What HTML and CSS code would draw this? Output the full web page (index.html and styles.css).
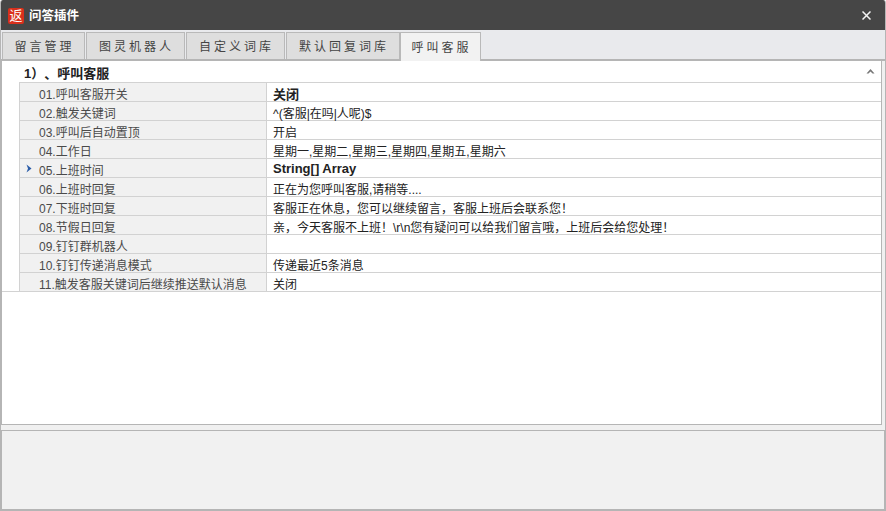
FILE: index.html
```html
<!DOCTYPE html>
<html lang="zh">
<head>
<meta charset="utf-8">
<title>问答插件</title>
<link rel="stylesheet" href="styles.css">
</head>
<body>
<div class="window">
  <header class="titlebar">
    <span class="app-icon">返</span>
    <span class="title">问答插件</span>
    <svg class="close" width="9" height="9" viewBox="0 0 9 9"><path d="M0.5 0.5L8.5 8.5M8.5 0.5L0.5 8.5" stroke="#f4f4f4" stroke-width="1.5" fill="none"/></svg>
  </header>
  <nav class="tabs">
    <div class="tab t1">留言管理</div>
    <div class="tab t2">图灵机器人</div>
    <div class="tab t3">自定义词库</div>
    <div class="tab t4">默认回复词库</div>
    <div class="tab t5 active">呼叫客服</div>
  </nav>
  <main class="grid-panel">
    <div class="section">
      <span class="section-title">1）、呼叫客服</span>
      <svg class="caret" width="9" height="5" viewBox="0 0 9 5"><path d="M4.5 0L8.5 4.5H6.5L4.5 2.5L2.5 4.5H0.5Z" fill="#777"/></svg>
    </div>
    <div class="rows">
      <div class="row"><div class="gutter"></div><div class="label">01.呼叫客服开关</div><div class="value bold">关闭</div></div>
      <div class="row"><div class="gutter"></div><div class="label">02.触发关键词</div><div class="value">^(客服|在吗|人呢)$</div></div>
      <div class="row"><div class="gutter"></div><div class="label">03.呼叫后自动置顶</div><div class="value">开启</div></div>
      <div class="row"><div class="gutter"></div><div class="label">04.工作日</div><div class="value">星期一,星期二,星期三,星期四,星期五,星期六</div></div>
      <div class="row"><div class="gutter"></div><div class="label"><svg class="marker" width="6" height="9" viewBox="0 0 6 9"><path d="M0.5 0.5L5.5 4.5L0.5 8.5L2 4.5Z" fill="#2a5ca8"/></svg>05.上班时间</div><div class="value bold latin">String[] Array</div></div>
      <div class="row"><div class="gutter"></div><div class="label">06.上班时回复</div><div class="value">正在为您呼叫客服,请稍等....</div></div>
      <div class="row"><div class="gutter"></div><div class="label">07.下班时回复</div><div class="value">客服正在休息，您可以继续留言，客服上班后会联系您！</div></div>
      <div class="row"><div class="gutter"></div><div class="label">08.节假日回复</div><div class="value">亲，今天客服不上班！\r\n您有疑问可以给我们留言哦，上班后会给您处理！</div></div>
      <div class="row"><div class="gutter"></div><div class="label">09.钉钉群机器人</div><div class="value"></div></div>
      <div class="row"><div class="gutter"></div><div class="label">10.钉钉传递消息模式</div><div class="value">传递最近5条消息</div></div>
      <div class="row last"><div class="gutter"></div><div class="label">11.触发客服关键词后继续推送默认消息</div><div class="value">关闭</div></div>
    </div>
  </main>
  <footer class="desc"></footer>
</div>
</body>
</html>
```
FILE: styles.css
```css
* { box-sizing: border-box; }
html, body { margin: 0; padding: 0; }
body { width: 886px; height: 511px; overflow: hidden; background: #fff; font: 12px/14px "Liberation Sans", "Noto Sans CJK SC", sans-serif; }
.window {
  width: 886px; height: 511px;
  display: flex; flex-direction: column;
  background: #f0f0f0;
  border: solid #b5b5b5; border-width: 0 1px 2px 1px;
  border-radius: 3px 3px 0 0;
  overflow: hidden;
}
.titlebar {
  height: 30px; margin: 0 -1px;
  background: #464646; color: #fff;
  display: flex; align-items: center;
  padding: 1px 15px 0 8px;
  flex: none;
}
.app-icon {
  width: 16px; height: 16px; border-radius: 2px;
  background: #d9301c; color: #fff;
  font-size: 13px; line-height: 15px; text-align: center;
  flex: none;
}
.title { margin-left: 5px; font-size: 12.5px; font-weight: bold; }
.close { margin-left: auto; margin-top: -1px; }
.tabs {
  height: 31px; flex: none;
  background: #e9eaed;
  display: flex; align-items: flex-end;
  gap: 1px;
  border-bottom: 2px solid #b5b5b5;
  margin: 0 -1px; padding: 2px 0 0 2px;
}
.tab {
  height: 27px;
  background: #dedede; color: #444;
  border: 1px solid #b9b9b9; border-bottom: 0;
  display: flex; align-items: center; justify-content: center;
  letter-spacing: 3px;
  padding: 1px 0 0 2px;
  font-size: 12px;
  flex: none;
}
.t1 { width: 83px; } .t2 { width: 99px; } .t3 { width: 99px; } .t4 { width: 114px; margin-right: -1px; }
.t5 { width: 81px; }
.tab.active { height: 29px; margin-bottom: -2px; background: #f2f2f2; position: relative; }
.grid-panel {
  height: 364px; flex: none;
  background: #fff;
  border: 1px solid #b5b5b5; border-top: 0;
  width: 881px;
}
.section {
  height: 22px; display: flex; align-items: flex-end;
  justify-content: space-between;
  margin-left: 17px; padding: 0 6px 0 5px;
  border-bottom: 1px solid #d2d2d2;
}
.section-title { font-size: 13px; font-weight: bold; color: #222; line-height: 16px; text-spacing-trim: space-all; }
.caret { margin-bottom: 8px; }
.row { height: 19px; display: flex; }
.gutter { width: 17px; flex: none; background: #fff; }
.last .gutter { border-bottom: 1px solid #d2d2d2; }
.label {
  width: 248px; flex: none; position: relative;
  background: #f1f1f1; color: #4a4a4a;
  border: solid #d2d2d2; border-width: 0 1px 1px 1px;
  padding: 5px 0 0 19px; line-height: 14px; white-space: nowrap;
}
.marker { position: absolute; left: 6px; top: 5px; }
.value {
  flex: 1; color: #222;
  border-bottom: 1px solid #d2d2d2;
  padding: 5px 0 0 6px; line-height: 14px; white-space: nowrap;
}
.bold { font-size: 13px; font-weight: bold; }
.latin { padding-top: 3px; }
.desc {
  flex: 1; margin-top: 5px;
  background: #f1f1f1;
  border: solid #b5b5b5; border-width: 1px 1px 0 1px;
}
```
